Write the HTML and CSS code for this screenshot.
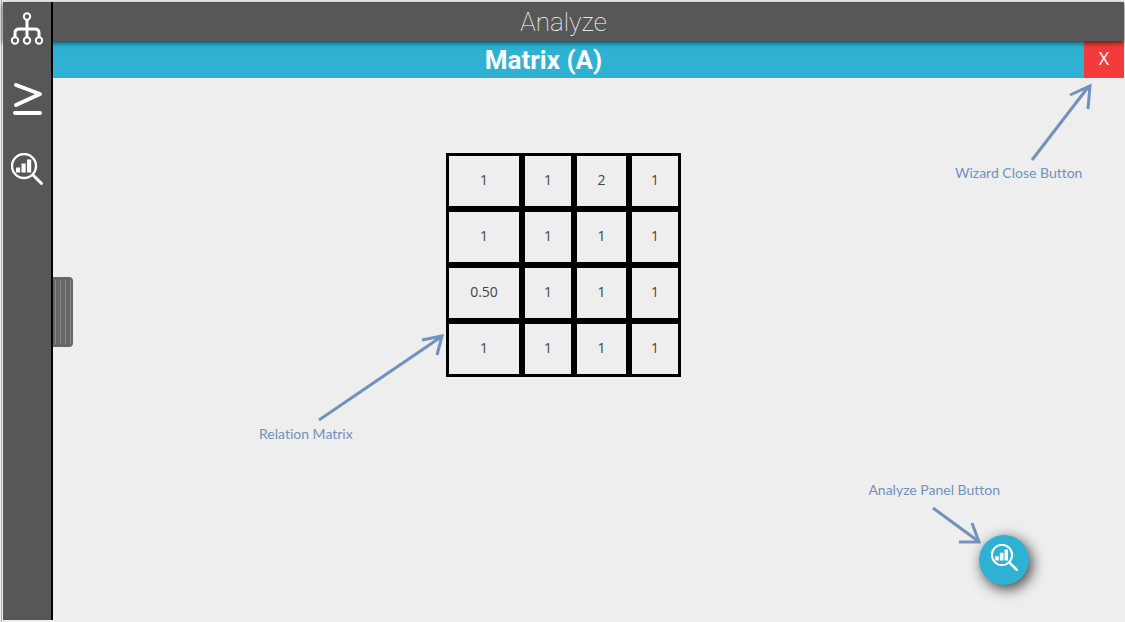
FILE: index.html
```html
<!DOCTYPE html>
<html lang="en">
<head>
<meta charset="utf-8">
<title>Analyze</title>
<link rel="stylesheet" href="styles.css">
</head>
<body>
<svg class="symbols" aria-hidden="true">
  <symbol id="icon-analyze" viewBox="0 0 32 32">
    <circle cx="13" cy="13" r="12" fill="none" stroke="#fff" stroke-width="2.4"/>
    <path d="M22 22L30.500 30.500" fill="none" stroke="#fff" stroke-width="3" stroke-linecap="round"/>
    <path d="M5 14.500h4.200v5H5zM10.500 10.500h4.200v9h-4.200zM16 6.500h4.200v13H16z" fill="#fff"/>
  </symbol>
</svg>
<div class="app">
  <header class="topbar"><h1 class="topbar-title">Analyze</h1></header>
  <div class="wizard-bar">
    <h2 class="wizard-title">Matrix (A)</h2>
    <button class="close" type="button" aria-label="Close wizard">X</button>
  </div>
  <main class="stage">
    <div class="matrix-wrap">
      <table class="matrix">
        <colgroup><col class="col-first"><col class="col-narrow"><col class="col-mid"><col class="col-narrow"></colgroup>
        <tbody>
          <tr><td>1</td><td>1</td><td>2</td><td>1</td></tr>
          <tr><td>1</td><td>1</td><td>1</td><td>1</td></tr>
          <tr><td>0.50</td><td>1</td><td>1</td><td>1</td></tr>
          <tr><td>1</td><td>1</td><td>1</td><td>1</td></tr>
        </tbody>
      </table>
      <div class="note note-matrix">
        <svg class="arrow" width="186" height="92" viewBox="0 0 186 92" aria-hidden="true"><path d="M60 87L182 4M163 7L183 3L178 22"/></svg>
        <span>Relation Matrix</span>
      </div>
    </div>
    <div class="note note-close">
      <svg class="arrow" width="140" height="82" viewBox="0 0 140 82" aria-hidden="true"><path d="M77 78L134 4M115 13L135 4L133 27"/></svg>
      <span>Wizard Close Button</span>
    </div>
  </main>
  <nav class="sidebar" aria-label="Tools">
    <button class="tool" type="button" aria-label="Hierarchy">
      <svg width="34" height="34" viewBox="0 0 34 34" fill="none" stroke="#fff">
        <g stroke-width="3"><path d="M17 8V26M5 26V21Q5 17 9 17H25Q29 17 29 21V26"/></g>
        <g stroke-width="2" fill="#575757"><circle cx="17" cy="4.500" r="3.200"/><circle cx="5" cy="28.500" r="3.200"/><circle cx="17" cy="28.500" r="3.200"/><circle cx="29" cy="28.500" r="3.200"/></g>
      </svg>
    </button>
    <button class="tool" type="button" aria-label="Compare">
      <svg width="34" height="34" viewBox="0 0 34 34" fill="none" stroke="#fff" stroke-width="4" stroke-linecap="round" stroke-linejoin="round"><path d="M6 3L30 12L6 23M5 31H30"/></svg>
    </button>
    <button class="tool" type="button" aria-label="Analyze">
      <svg width="32" height="32"><use href="#icon-analyze"/></svg>
    </button>
  </nav>
  <button class="handle" type="button" aria-label="Open side panel"><i></i><i></i><i></i><i></i></button>
  <button class="fab" type="button" aria-label="Open analyze panel"><svg width="27" height="27"><use href="#icon-analyze"/></svg></button>
  <div class="note note-panel">
    <span>Analyze Panel Button</span>
    <svg class="arrow" width="114" height="48" viewBox="0 0 114 48" aria-hidden="true"><path d="M65 9L110 42M104 24L111 43H91"/></svg>
  </div>
</div>
</body>
</html>
```
FILE: styles.css
```css
* { box-sizing: border-box; }
body {
  margin: 0;
  background: #eee;
  font-family: Roboto, "Open Sans", sans-serif;
}
button {
  padding: 0;
  border: 0;
  font: inherit;
  cursor: pointer;
}
h1, h2 { margin: 0; }
.symbols { position: absolute; width: 0; height: 0; }
.app {
  position: relative;
  display: flex;
  flex-direction: column;
  min-height: 100vh;
  padding: 2px 1px 0 3px;
  background: #eee;
}
.app::before {
  content: "";
  position: absolute;
  top: 0;
  bottom: 0;
  left: 1px;
  width: 1px;
  background: #aaa;
}
.topbar {
  position: relative;
  z-index: 2;
  display: flex;
  align-items: center;
  justify-content: center;
  height: 39px;
  background: #575757;
  box-shadow: 0 2px 5px rgba(0, 0, 0, 0.6);
}
.topbar-title {
  color: #fff;
  font-size: 26px;
  font-weight: 100;
  line-height: 36px;
}
.wizard-bar {
  display: flex;
  height: 37px;
  background: #2fb1d3;
}
.wizard-title {
  flex: 1;
  color: #fff;
  font-size: 26px;
  font-weight: 700;
  line-height: 38px;
  text-align: center;
}
.close {
  width: 40px;
  padding-bottom: 4px;
  background: #f43b3b;
  color: #fff;
  font-family: "Open Sans", sans-serif;
  font-size: 18px;
  line-height: 32px;
}
.stage {
  position: relative;
  flex: 1;
  display: flex;
  justify-content: center;
  align-items: flex-start;
  padding-top: 75px;
}
.matrix-wrap { position: relative; }
.matrix {
  border-spacing: 0;
  table-layout: fixed;
  width: 235px;
  color: #444;
  font-family: "Open Sans", sans-serif;
  font-size: 14px;
}
.matrix td {
  height: 56px;
  padding: 0 0 3px;
  border: 3px solid #000;
  text-align: center;
}
.col-first { width: 76px; }
.col-narrow { width: 52px; }
.col-mid { width: 55px; }
.note {
  position: absolute;
  display: flex;
  flex-direction: column;
  color: #7191bf;
  font-family: Lato, sans-serif;
  font-size: 14px;
  font-variant-ligatures: none;
  line-height: 18px;
  white-space: nowrap;
  pointer-events: none;
}
.arrow {
  display: block;
  fill: none;
  stroke: #7191bf;
  stroke-width: 3;
}
.note-matrix { top: 180px; right: 236px; }
.note-close { top: 4px; right: 29px; }
.note-panel { right: 125px; bottom: 75px; }
.sidebar {
  position: absolute;
  z-index: 3;
  top: 2px;
  bottom: 2px;
  left: 3px;
  display: flex;
  flex-direction: column;
  align-items: center;
  gap: 20px;
  width: 50px;
  padding-top: 2px;
  border-right: 2px solid #000;
  background: #575757;
}
.tool {
  display: grid;
  place-items: center;
  width: 48px;
  height: 50px;
  background: none;
}
.handle {
  position: absolute;
  top: calc(50% - 34px);
  left: 53px;
  display: flex;
  gap: 4px;
  width: 20px;
  height: 70px;
  padding: 3px 2px;
  border-radius: 0 4px 4px 0;
  background: #666;
}
.handle i {
  width: 1px;
  height: 64px;
  background: #888;
}
.fab {
  position: absolute;
  right: 96px;
  bottom: 37px;
  display: grid;
  place-items: center;
  width: 50px;
  height: 50px;
  padding-bottom: 6px;
  border-radius: 50%;
  background: #2fb1d3;
  box-shadow: 3px 4px 14px rgba(0, 0, 0, 0.75);
}
```
